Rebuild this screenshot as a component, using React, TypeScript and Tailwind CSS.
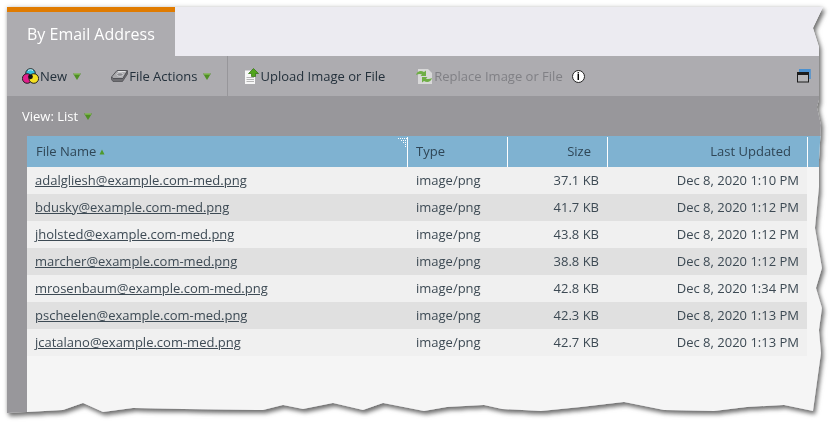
import type { ReactNode } from "react"

const files = [
    { name: "adalgliesh@example.com-med.png", size: "37.1 KB", updated: "Dec 8, 2020 1:10 PM" },
    { name: "bdusky@example.com-med.png", size: "41.7 KB", updated: "Dec 8, 2020 1:12 PM" },
    { name: "jholsted@example.com-med.png", size: "43.8 KB", updated: "Dec 8, 2020 1:12 PM" },
    { name: "marcher@example.com-med.png", size: "38.8 KB", updated: "Dec 8, 2020 1:12 PM" },
    { name: "mrosenbaum@example.com-med.png", size: "42.8 KB", updated: "Dec 8, 2020 1:34 PM" },
    { name: "pscheelen@example.com-med.png", size: "42.3 KB", updated: "Dec 8, 2020 1:13 PM" },
    { name: "jcatalano@example.com-med.png", size: "42.7 KB", updated: "Dec 8, 2020 1:13 PM" },
]

function Caret() {
    return (
        <svg width="8" height="7" viewBox="0 0 8 7" className="shrink-0 block">
            <path d="M0 0.5H8L4 7Z" fill="#4f8f24" />
            <path d="M1 1H7" stroke="#9ccb6a" strokeWidth="1" />
        </svg>
    )
}

function NewIcon() {
    return (
        <svg width="17" height="16" viewBox="0 0 17 16" className="shrink-0">
            <circle cx="8.5" cy="5.5" r="4.8" fill="#35c0dc" stroke="#222" />
            <circle cx="5.2" cy="10.5" r="4.8" fill="#e0208c" stroke="#222" />
            <circle cx="11.8" cy="10.5" r="4.8" fill="#f5e020" stroke="#222" />
            <circle cx="8.5" cy="8.8" r="2.4" fill="#111" />
            <path d="M6 2.5C7.5 1.6 9.5 1.6 11 2.5" stroke="#d8f6fb" fill="none" />
        </svg>
    )
}

function DiskIcon() {
    return (
        <svg width="17" height="14" viewBox="0 0 17 14" className="shrink-0">
            <path d="M0.5 8L6 1.5H16.5L12 9.5H2Z" fill="#a9a9ac" stroke="#56565a" />
            <path d="M0.5 8V10.5L2 12.5H11.5L16.5 5V2L12 9.5H2Z" fill="#6f6f73" stroke="#4c4c50" strokeWidth="0.7" />
            <ellipse cx="9" cy="5.5" rx="3.2" ry="1.8" fill="#8a8a8e" stroke="#e4e4e6" strokeWidth="0.7" />
            <path d="M7 2.6H14.5" stroke="#e8e8ea" />
        </svg>
    )
}

function UploadIcon() {
    return (
        <svg width="14" height="16" viewBox="0 0 14 16" className="shrink-0">
            <path d="M0 2.5H10V16H0Z" fill="#f7f7f7" />
            <path d="M1.5 9.5H9M1.5 11.5H9M1.5 13.5H9" stroke="#b5b5b5" />
            <path d="M8.5 0.5L13.5 5.5H10.5V8.5H6.5V5.5H3.5Z" fill="#52a51c" stroke="#2f6e10" strokeWidth="0.7" />
        </svg>
    )
}

function ReplaceIcon() {
    return (
        <svg width="18" height="17" viewBox="0 0 18 17" className="shrink-0">
            <path d="M3 1H13L17 5V16H3Z" fill="#d8d8d8" />
            <path d="M1 7C2 3 6 2 9 4L11 2.5V8H5.5L7 6.5C5.5 5.5 3 6 1 7Z" fill="#6fae46" />
            <path d="M17 10C16 14 12 15 9 13L7 14.5V9H12.5L11 10.5C12.5 11.5 15 11 17 10Z" fill="#6fae46" />
        </svg>
    )
}

function ToolbarItem({ icon, label, muted, caret }: { icon: ReactNode; label: string; muted?: boolean; caret?: boolean }) {
    return (
        <div className={`flex items-center ${muted ? "text-[#808085]" : "text-[#23303b]"}`}>
            {icon}
            <span className="ml-px pt-px">{label}</span>
            {caret && <span className="ml-[6px]"><Caret /></span>}
        </div>
    )
}

export default function App() {
    return (
        <div className="w-[834px] h-[424px] bg-white overflow-hidden">
            <div className="h-[424px] [filter:drop-shadow(2px_3px_2px_rgba(0,0,0,0.5))_drop-shadow(0_0_2px_rgba(0,0,0,0.2))]">
                <div className="h-[424px] pl-[7px] pt-[7px] bg-[#f5f5f5] flex flex-col text-[13px] [font-family:'Open_Sans',sans-serif] [clip-path:polygon(7px_7px,823px_7px,813px_28px,819px_47px,819px_100px,817px_107px,821px_125px,819px_160px,819px_187px,815px_228px,822px_268px,816px_288px,822px_308px,819px_330px,821px_353px,813px_411px,784px_405px,747px_407px,714px_411px,664px_410px,624px_402px,581px_407px,541px_411px,502px_409px,484px_405px,447px_407px,424px_411px,383px_403px,363px_410px,333px_403px,303px_409px,283px_405px,263px_410px,183px_409px,133px_408px,103px_412px,83px_403px,63px_410px,27px_412px,7px_413px)]">
                    {/* Tabs */}
                    <div className="h-[49px] shrink-0 bg-[#ecebf1] flex">
                        <div className="w-[168px] bg-[#adacb0] border-t-[5px] border-[#e07b00] pl-5 pt-[7px] text-base leading-[30px] text-white">
                            By Email Address
                        </div>
                    </div>

                    {/* Toolbar */}
                    <div className="h-10 shrink-0 bg-[#adacb0] flex items-center pl-[15px]">
                        <ToolbarItem icon={<NewIcon />} label="New" caret />
                        <div className="ml-[30px] mr-[16px]">
                            <ToolbarItem icon={<DiskIcon />} label="File Actions" caret />
                        </div>
                        <div className="w-px h-10 bg-[#97969a] mr-[17px]" />
                        <ToolbarItem icon={<UploadIcon />} label="Upload Image or File" />
                        <div className="ml-[30px]">
                            <ToolbarItem icon={<ReplaceIcon />} label="Replace Image or File" muted />
                        </div>
                        <div className="ml-[9px] w-[13px] h-[13px] rounded-full bg-white border border-[#222] text-black text-[10px] leading-[11px] font-bold text-center">
                            i
                        </div>
                        <svg width="14" height="14" viewBox="0 0 14 14" className="ml-[212px] shrink-0">
                            <path d="M2 0.5H13V10" fill="none" stroke="#4a90d0" strokeWidth="1.5" />
                            <path d="M2 0H13V3H2Z" fill="#4a90d0" />
                            <rect x="0.5" y="3.5" width="11" height="9.5" fill="#b5b5b8" stroke="#1c1c1c" />
                            <rect x="0" y="3" width="12" height="3" fill="#1c1c1c" />
                        </svg>
                    </div>

                    {/* Body */}
                    <div className="flex-1 bg-[#98979b] flex flex-col">
                        <div className="h-10 shrink-0 flex items-center pl-[15px] pt-px text-white">
                            View: List
                            <span className="ml-[6px]"><Caret /></span>
                        </div>
                        <div className="flex-1 ml-5 bg-[#f5f5f5]">
                            <div className="h-[31px] bg-[#7fb2d1] flex items-center text-[#2f4656] pt-px">
                                <div className="relative w-[381px] h-full flex items-center gap-[3px] pl-[9px] border-r border-white">
                                    File Name
                                    <svg width="6" height="6" viewBox="0 0 6 6">
                                        <path d="M3 0.5L5.5 5.5H0.5Z" fill="#4f9a2c" />
                                    </svg>
                                    <svg width="9" height="9" viewBox="0 0 9 9" shapeRendering="crispEdges" className="absolute right-0 top-px">
                                        <path d="M0 0.5H1M2 0.5H3M4 0.5H5M6 0.5H7M8 0.5H9M3 2.5H4M5 2.5H6M7 2.5H8M5 4.5H6M7 4.5H8M7 6.5H8M7 8.5H8" stroke="#fff" strokeWidth="1" />
                                    </svg>
                                </div>
                                <div className="w-[100px] h-full flex items-center pl-2 border-r border-white">Type</div>
                                <div className="w-[100px] h-full flex items-center justify-end pr-4 border-r border-white">Size</div>
                                <div className="w-[200px] h-full flex items-center justify-end pr-4 border-r border-white">Last Updated</div>
                            </div>
                            {files.map((file, index) => (
                                <div
                                    key={file.name}
                                    className={`w-[780px] h-[27px] flex items-center text-[#3d4a54] ${index % 2 ? "bg-[#e0e0e0]" : "bg-[#f0f0f0]"}`}
                                >
                                    <div className="w-[381px] pl-2 underline">{file.name}</div>
                                    <div className="w-[100px] pl-[8px]">image/png</div>
                                    <div className="w-[100px] pr-[9px] text-right">{file.size}</div>
                                    <div className="w-[199px] pr-2 text-right">{file.updated}</div>
                                </div>
                            ))}
                        </div>
                    </div>
                </div>
            </div>
        </div>
    )
}
